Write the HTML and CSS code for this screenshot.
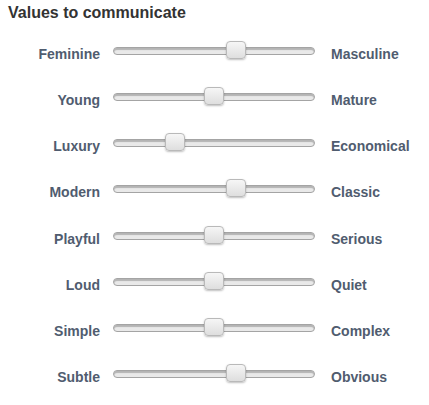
FILE: index.html
```html
<!DOCTYPE html>
<html>
<head>
<meta charset="utf-8">
<link rel="stylesheet" href="styles.css">
</head>
<body>
<h1 class="title">Values to communicate</h1>
<div class="sliders">
  <div class="label left">Feminine</div>
  <div class="track"><div class="thumb" style="left:112px"></div></div>
  <div class="label right">Masculine</div>

  <div class="label left">Young</div>
  <div class="track"><div class="thumb" style="left:90px"></div></div>
  <div class="label right">Mature</div>

  <div class="label left">Luxury</div>
  <div class="track"><div class="thumb" style="left:51px"></div></div>
  <div class="label right">Economical</div>

  <div class="label left">Modern</div>
  <div class="track"><div class="thumb" style="left:112px"></div></div>
  <div class="label right">Classic</div>

  <div class="label left">Playful</div>
  <div class="track"><div class="thumb" style="left:90px"></div></div>
  <div class="label right">Serious</div>

  <div class="label left">Loud</div>
  <div class="track"><div class="thumb" style="left:90px"></div></div>
  <div class="label right">Quiet</div>

  <div class="label left">Simple</div>
  <div class="track"><div class="thumb" style="left:90px"></div></div>
  <div class="label right">Complex</div>

  <div class="label left">Subtle</div>
  <div class="track"><div class="thumb" style="left:112px"></div></div>
  <div class="label right">Obvious</div>
</div>
</body>
</html>
```
FILE: styles.css
```css
html, body {
  margin: 0;
  background: #ffffff;
}
body {
  padding: 4px 8px 0 8px;
  font-family: "Liberation Sans", Arial, Helvetica, sans-serif;
}
.title {
  margin: 0;
  font-size: 16px;
  line-height: 18px;
  font-weight: bold;
  color: #333333;
}
.sliders {
  margin-top: 9px;
  display: grid;
  grid-template-columns: 92px 215px auto;
  grid-auto-rows: 46.15px;
  align-items: center;
}
.label {
  font-size: 14px;
  font-weight: bold;
  color: #505c6f;
  line-height: 16px;
}
.label.left {
  text-align: right;
}
.label.right {
  padding-left: 16px;
}
.track {
  position: relative;
  margin-left: 13px;
  width: 200px;
  height: 6px;
  border: 1px solid #a4a4a4;
  border-radius: 4px;
  background: #e9e9e9;
  box-shadow: inset 0 2px 1px #b4b4b4;
  top: -3px;
}
.thumb {
  position: absolute;
  top: -7px;
  width: 18px;
  height: 16px;
  border: 1px solid #b9b9b9;
  border-radius: 4px;
  background: linear-gradient(#f6f6f6, #dedede);
  box-shadow: 0 1px 2px rgba(0,0,0,0.25);
}
```
